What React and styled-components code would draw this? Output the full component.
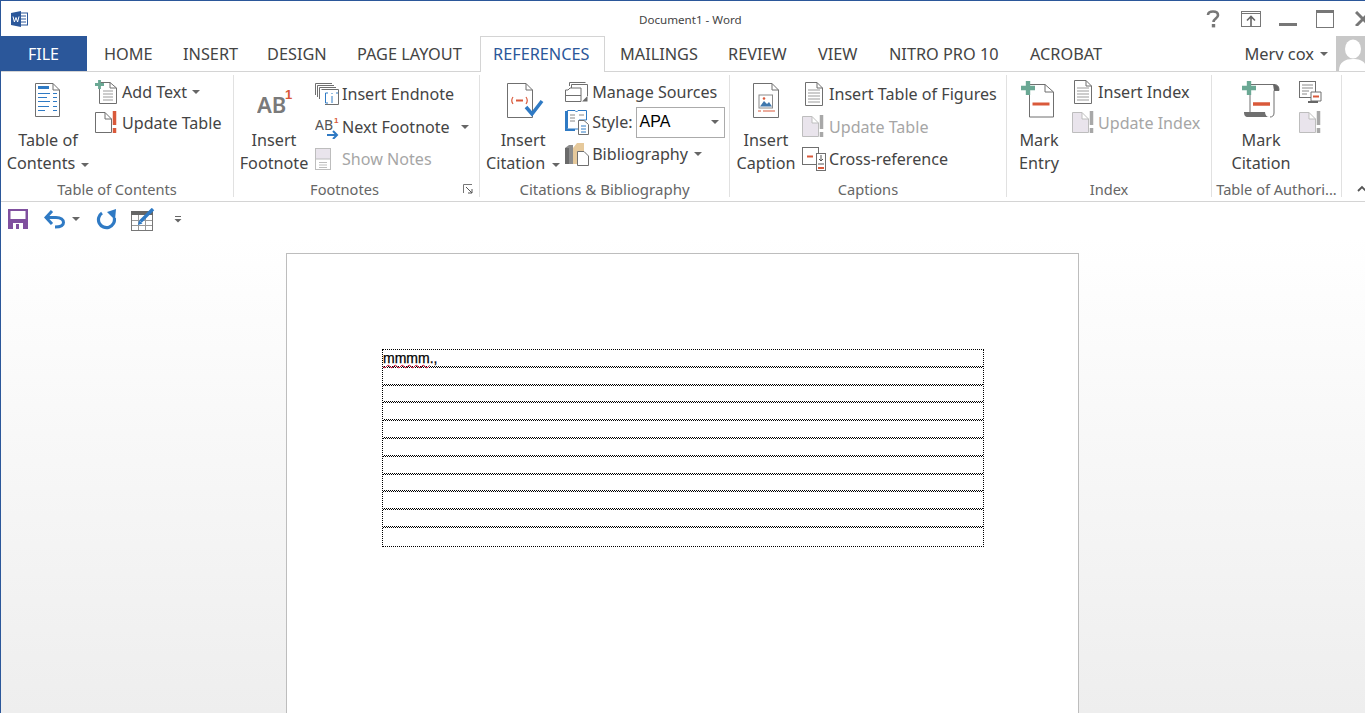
import React from 'react';
import styled, { createGlobalStyle } from 'styled-components';

const Global = createGlobalStyle`
  html, body {
    margin: 0;
    height: 100%;
    overflow: hidden;
    background: #fff;
  }
  svg {
    display: block;
  }
`;

const FONT = '"Noto Sans", "Open Sans", sans-serif';

const Window = styled.div`
  display: flex;
  flex-direction: column;
  height: 713px;
  overflow: hidden;
  box-sizing: border-box;
  border-top: 1px solid #2b579a;
  border-left: 1px solid #2b579a;
  font-family: ${FONT};
  color: #444;
`;

const TitleBar = styled.div`
  position: relative;
  display: flex;
  align-items: center;
  flex: none;
  height: 35px;
  padding-left: 10px;
`;

const Title = styled.div`
  position: absolute;
  left: 638px;
  top: 11px;
  font-size: 11.6px;
  line-height: 16px;
  color: #444;
`;

const Controls = styled.div`
  margin-left: auto;
  display: flex;
  align-items: center;
`;

const Control = styled.div`
  margin-left: ${p => p.$ml}px;
  margin-top: ${p => p.$drop || 0}px;
`;

const TabBar = styled.div`
  display: flex;
  flex: none;
  height: 36px;
  box-sizing: border-box;
  border-bottom: 1px solid #d4d4d4;
`;

const FileTab = styled.div`
  flex: 0 0 87px;
  height: 35px;
  margin-left: -1px;
  margin-right: 2px;
  display: flex;
  align-items: center;
  justify-content: center;
  background: #2b579a;
  color: #fff;
  font-size: 16px;
`;

const Tab = styled.div`
  flex: 0 0 ${p => p.$w}px;
  height: 35px;
  box-sizing: border-box;
  display: flex;
  align-items: center;
  padding-left: ${p => (p.$active ? 12 : 15)}px;
  font-size: 16.3px;
  white-space: nowrap;
  color: ${p => (p.$active ? '#2b579a' : '#444')};
  background: #fff;
  ${p => p.$active && `
    height: 36px;
    margin-bottom: -1px;
    padding-bottom: 2px;
    border: 1px solid #d4d4d4;
    border-bottom: none;
  `}
`;

const Account = styled.div`
  margin-left: auto;
  display: flex;
  align-items: center;
  gap: 8px;
  height: 35px;
  font-size: 16.4px;
`;

const Ribbon = styled.div`
  display: flex;
  flex: none;
  height: 130px;
  box-sizing: border-box;
  border-bottom: 1px solid #d4d4d4;
  background: #fff;
`;

const Group = styled.div`
  position: relative;
  flex: 0 0 ${p => p.$w}px;
  box-sizing: border-box;
  display: flex;
  flex-direction: column;
  height: 122px;
  margin-top: 3px;
  border-right: 1px solid #e1e1e1;
`;

const GroupBody = styled.div`
  flex: 1;
  min-height: 0;
  display: flex;
  padding-left: ${p => p.$pad}px;
`;

const GroupLabel = styled.div`
  flex: none;
  height: 19px;
  padding-right: ${p => p.$inset || 0}px;
  text-align: center;
  font-size: ${p => p.$size || 14.6}px;
  line-height: 22px;
  color: #666;
  white-space: nowrap;
`;

const Launcher = styled.div`
  position: absolute;
  right: 6px;
  bottom: 3px;
`;

const LargeButton = styled.div`
  flex: 0 0 ${p => p.$w}px;
  display: flex;
  flex-direction: column;
  align-items: center;
`;

const LargeIcon = styled.div`
  height: ${p => 54 - (p.$top ?? 8)}px;
  margin-top: ${p => p.$top ?? 8}px;
  margin-left: ${p => p.$shift || 0}px;
  display: flex;
  align-items: flex-start;
  justify-content: center;
`;

const LargeText = styled.div`
  font-size: 16.2px;
  line-height: 23px;
  text-align: center;
  white-space: nowrap;
`;

const SmallColumn = styled.div`
  display: flex;
  flex-direction: column;
  margin-left: ${p => p.$gap || 0}px;
  padding-top: ${p => p.$top}px;
`;

const SmallRow = styled.div`
  display: flex;
  align-items: center;
  height: ${p => p.$h}px;
  font-size: 16.1px;
  white-space: nowrap;
  color: ${p => (p.$off ? '#a6a6a6' : '#444')};
`;

const SmallIcon = styled.div`
  flex: 0 0 ${p => p.$w || 27}px;
  box-sizing: border-box;
  padding-left: ${p => p.$inset || 0}px;
  display: flex;
  align-items: center;
`;

const StyleSelect = styled.div`
  width: 89px;
  height: 31px;
  margin-left: 3px;
  box-sizing: border-box;
  display: flex;
  align-items: center;
  justify-content: space-between;
  padding: 0 5px 0 3px;
  border: 1px solid #ababab;
  font-family: "Liberation Sans", Arial, sans-serif;
  font-size: 16px;
  color: #000;
`;

const Caret = styled.span`
  display: inline-block;
  flex: none;
  width: 0;
  height: 0;
  margin-left: ${p => p.$ml || 0}px;
  vertical-align: middle;
  border-left: 4px solid transparent;
  border-right: 4px solid transparent;
  border-top: 4px solid #666;
`;

const CollapseButton = styled.div`
  flex: 1;
  display: flex;
  align-items: flex-end;
  justify-content: flex-end;
  padding-bottom: 9px;
  margin-right: -1px;
`;

const QuickBar = styled.div`
  display: flex;
  align-items: center;
  flex: none;
  height: 35px;
  padding-left: 7px;
  padding-bottom: 1px;
  box-sizing: border-box;
  background: #fff;
`;

const QuickItem = styled.div`
  display: flex;
  align-items: center;
  margin-left: ${p => p.$ml || 0}px;
`;

const Workspace = styled.div`
  flex: 1;
  min-height: 0;
  padding: 16px 0 0 285px;
  background: linear-gradient(#fff, #eee);
  overflow: hidden;
`;

const Page = styled.div`
  width: 793px;
  height: 600px;
  box-sizing: border-box;
  padding: 95px 0 0 95px;
  background: #fff;
  border: 1px solid #bdbdbd;
`;

const DocTable = styled.div`
  width: 602px;
  box-sizing: border-box;
  border: 1px dotted #000;
  font-family: "Liberation Sans", Arial, sans-serif;
  font-size: 14px;
  color: #000;
`;

// the row rule is Word's gridline: a two pixel checker, not a plain dotted line
const DocRow = styled.div`
  height: 17.8px;
  line-height: 16px;
  white-space: nowrap;
  -webkit-text-stroke: 0.25px #000;
  ${p => !p.$last && `
    background: conic-gradient(#000 25%, #fff 0 50%, #000 0 75%, #fff 0) left bottom / 2px 2px repeat-x;
  `}
`;

const Misspelt = styled.span`
  text-decoration: underline wavy #e0103a 1px;
  text-underline-offset: 1px;
`;

const LINE = '#6f6f6f';
const BLUE = '#2f7ac4';
const RED = '#d9593a';
const TEAL = '#6aa894';
const PALE = '#e9e4ec';
const PALE_LINE = '#bdbdbd';

// folded sheet of paper, used by most of the ribbon icons
const sheet = (w, h, f = 7) => `M.5 .5H${w - f}L${w - .5} ${f}V${h - .5}H.5Z M${w - f} .5V${f}H${w - .5}`;

const Plus = ({ x = 0, y = 0, s = 14 }) => (
  <path d={`M${x + s / 2} ${y}V${y + s}M${x} ${y + s / 2}H${x + s}`} stroke={TEAL} strokeWidth={s / 3.2} fill="none" />
);

const WordLogo = () => (
  <svg width="17" height="16" viewBox="0 0 17 16">
    <rect x="6" y="2" width="10.5" height="12" fill="#fff" stroke="#2b579a" />
    <path d="M10 5h5M10 8h5M10 11h5" stroke="#2b579a" />
    <path d="M0 2 10 0v16L0 14Z" fill="#2b579a" />
    <path d="M2 5.5 3.4 11 5 6.5 6.6 11 8 5.5" stroke="#fff" strokeWidth="1" fill="none" />
  </svg>
);

const TocIcon = () => (
  <svg width="26" height="35" viewBox="0 0 26 35">
    <path d={sheet(25, 34)} fill="#fff" stroke={LINE} />
    <path d="M3 4.5H14" stroke={BLUE} strokeWidth="3" />
    <path d="M3 10.5H15M18 10.5H22M3 14.5H12M18 14.5H22M3 18.5H15M18 18.5H22M3 23.5H14M18 23.5H22M3 27.5H10M18 27.5H22" stroke={BLUE} />
  </svg>
);

const AddTextIcon = () => (
  <svg width="23" height="24" viewBox="0 0 23 24">
    <path d="M4.5 2.5H15L21.5 8V23.5H4.5Z M15 2.5V8H21.5" fill="#fff" stroke={LINE} />
    <path d="M8 11H18M8 14H18M8 17H18M8 20H18" stroke="#9b9b9b" />
    <Plus x={0} y={0} s={9} />
  </svg>
);

const UpdateIcon = ({ off }) => (
  <svg width="23" height="23" viewBox="0 0 23 23">
    <path d={sheet(17, 21)} transform="translate(0 1)" fill={off ? PALE : '#fff'} stroke={off ? PALE_LINE : LINE} />
    <path d="M19.5 0V14M19.5 17V22" stroke={off ? '#a8a8a8' : RED} strokeWidth="3.5" />
  </svg>
);

const AbIcon = () => (
  <svg width="36" height="38" viewBox="0 0 36 38">
    <text x="0" y="31" fontFamily="'Noto Sans', sans-serif" fontWeight="600" fontSize="22" fill="#7a7a7a">AB</text>
    <text x="28" y="17" fontFamily="'Liberation Sans', sans-serif" fontWeight="700" fontSize="13" fill={RED}>1</text>
  </svg>
);

const EndnoteIcon = () => (
  <svg width="24" height="22" viewBox="0 0 24 22">
    <path d="M.5 12V.5H17M2.5 14V2.5H19M4.5 16V4.5H21" fill="none" stroke={LINE} />
    <path d="M6.5 6.5H23.5V21.5H10" fill="#fff" stroke={LINE} />
    <path d="M13 10H10.5V20H13M21 10H23" fill="none" stroke={BLUE} />
    <path d="M17 10V11M17 13V20" stroke={BLUE} />
  </svg>
);

const NextNoteIcon = () => (
  <svg width="24" height="24" viewBox="0 0 24 24">
    <text x="0" y="15" fontFamily="'Noto Sans', sans-serif" fontSize="14" fill="#555">AB</text>
    <text x="19" y="8" fontFamily="'Liberation Sans', sans-serif" fontWeight="700" fontSize="8" fill={RED}>1</text>
    <path d="M12 20H22M18 16l4 4-4 4" stroke={BLUE} strokeWidth="2" fill="none" />
  </svg>
);

const NotesIcon = () => (
  <svg width="16" height="22" viewBox="0 0 16 22">
    <rect x=".5" y=".5" width="15" height="21" fill={PALE} stroke={PALE_LINE} />
    <rect x=".5" y="11" width="15" height="10.5" fill="#fff" stroke={PALE_LINE} />
    <path d="M4 14.5H12M4 17H12M4 19.500H12" stroke={PALE_LINE} />
  </svg>
);

const LauncherIcon = () => (
  <svg width="10" height="10" viewBox="0 0 10 10">
    <path d="M.5 9V.5H9" fill="none" stroke="#777" />
    <path d="M3 3 9 9M9 5V9H5" fill="none" stroke="#555" />
  </svg>
);

const CitationIcon = () => (
  <svg width="38" height="36" viewBox="0 0 38 36">
    <path d={sheet(26, 35)} fill="#fff" stroke={LINE} />
    <path d="M6 14Q3.500 17.500 6 21M19 14Q21.500 17.500 19 21" fill="none" stroke={RED} strokeWidth="1.2" />
    <path d="M9 17.500H16" stroke={RED} strokeWidth="2" />
    <path d="M19 24 25 31 35 18" fill="none" stroke={BLUE} strokeWidth="3.5" />
  </svg>
);

const SourcesIcon = () => (
  <svg width="23" height="20" viewBox="0 0 23 20">
    <path d="M4.500 4V.5H20.500M6.500 6V2.500H22.500V14" fill="none" stroke={LINE} />
    <path d="M.5 8H3L5 6H16V19.500H.5Z" fill="#fff" stroke={LINE} />
    <path d="M.5 13.500H16" stroke={LINE} />
    <path d="M17 19.500 22.500 14V19.500Z" fill="#6a6a6a" />
  </svg>
);

const StyleIcon = () => (
  <svg width="24" height="25" viewBox="0 0 24 25">
    <path d="M1 1V20H10" fill="none" stroke={BLUE} strokeWidth="2" />
    <path d="M2.500 18.500V.5H10L11.500 2L13 .5H21.500V10H14V19H2.500Z" fill="#fff" stroke={BLUE} />
    <path d="M5 5H10M5 8H10M5 11H10M14 5H19" stroke="#888" />
    <path d="M13.500 10.500H19L23.500 14.500V24.500H13.500Z" fill="#fff" stroke={LINE} />
    <path d="M16 16H21M16 19H21M16 22H21" stroke={BLUE} />
  </svg>
);

const BiblioIcon = () => (
  <svg width="24" height="24" viewBox="0 0 24 24">
    <path d="M0 6 4 3H8V22H0Z" fill="#8c8c8c" />
    <path d="M0 6H4V22H0Z" fill="#6a6a6a" />
    <path d="M8 6 12 1H19V9H14V22H8Z" fill="#e6c99b" />
    <path d="M12.500 9.500H19L23.500 14V23.500H12.500Z" fill="#fff" stroke={LINE} />
  </svg>
);

const CaptionIcon = () => (
  <svg width="27" height="36" viewBox="0 0 27 36">
    <path d={sheet(26, 35)} fill="#fff" stroke={LINE} />
    <rect x="6" y="12" width="13.500" height="13" fill="#fff" stroke="#8a8a8a" />
    <path d="M7 23.500 11 18 14 21 16 19 19 23.500Z" fill="#3f77ad" />
    <circle cx="11" cy="15.500" r="1.300" fill={RED} />
    <path d="M5 28H8M10 28H22" stroke={RED} />
  </svg>
);

const FiguresIcon = () => (
  <svg width="18" height="24" viewBox="0 0 18 24">
    <path d={sheet(18, 24, 6)} fill="#fff" stroke={LINE} />
    <path d="M3 8H15M3 11H15M3 14H15M3 17H15M3 20H15" stroke="#9b9b9b" />
  </svg>
);

const CrossRefIcon = () => (
  <svg width="24" height="24" viewBox="0 0 24 24">
    <rect x=".5" y=".5" width="16" height="17" fill="#fff" stroke={LINE} />
    <path d="M5 9.500H11" stroke={RED} strokeWidth="2" />
    <rect x="14.500" y="6.500" width="9" height="17" fill="#fff" stroke={LINE} />
    <path d="M19 8V14M17 12l2 2 2-2M16 17H22" stroke="#555" fill="none" />
    <path d="M16 21H22" stroke={RED} strokeWidth="2" />
  </svg>
);

const MarkEntryIcon = () => (
  <svg width="33" height="37" viewBox="0 0 33 37">
    <path d="M8.500 3.500H24L32.500 11V36H8.500Z M24 3.500V11H32.500" fill="#fff" stroke={LINE} />
    <path d="M11.500 23H28.500" stroke={RED} strokeWidth="3" />
    <Plus x={0} y={0} s={14} />
  </svg>
);

const MarkCitationIcon = () => (
  <svg width="38" height="37" viewBox="0 0 38 37">
    <path d="M7.500 3.500H33M32 3.500C36 3.500 37 6 37 9.500H32V32C32 35 30 36 28 36" fill="none" stroke={LINE} />
    <path d="M31 3.500C36 3.500 37 6 37 9.500H32Z" fill="#666" />
    <path d="M8 3.500V31" stroke={LINE} />
    <path d="M2 31H23C23 34 25 36 27 36H6C3 36 2 34 2 31Z" fill="#6f6f6f" />
    <path d="M11 23H28" stroke={RED} strokeWidth="3.500" />
    <Plus x={0} y={0} s={14} />
  </svg>
);

const SmallCitationIcon = () => (
  <svg width="23" height="22" viewBox="0 0 23 22">
    <rect x=".5" y=".5" width="16" height="16" fill="#fff" stroke={LINE} />
    <path d="M3 4H14M3 7H14M3 10H10M3 13H8" stroke="#8a8a8a" />
    <path d="M12 11H22V20H12Z" fill="#fff" stroke={LINE} />
    <path d="M14 15.500H20" stroke={RED} strokeWidth="2" />
    <path d="M9 20H19V22H9Z" fill="#666" />
  </svg>
);

const HelpIcon = () => (
  <svg width="14" height="18" viewBox="0 0 14 18">
    <path d="M2 5C2 2.500 4 1.500 7 1.500S12 3 12 5.200C12 8.500 7.500 8.500 7.500 12" fill="none" stroke="#777" strokeWidth="2.600" />
    <rect x="5.800" y="14" width="3.400" height="3.400" fill="#777" />
  </svg>
);

const RestoreRibbonIcon = () => (
  <svg width="20" height="16" viewBox="0 0 20 16">
    <rect x=".5" y=".5" width="19" height="15" fill="none" stroke="#777" />
    <path d="M0 2.500H20" stroke="#777" />
    <path d="M10 15V6M6 9.500 10 5.500 14 9.500" fill="none" stroke="#666" strokeWidth="1.600" />
  </svg>
);

const MinimizeIcon = () => (
  <svg width="18" height="3" viewBox="0 0 18 3">
    <rect width="18" height="3" fill="#777" />
  </svg>
);

const MaximizeIcon = () => (
  <svg width="18" height="18" viewBox="0 0 18 18">
    <rect x=".5" y=".5" width="17" height="17" fill="none" stroke="#777" />
    <rect width="18" height="3" fill="#777" />
  </svg>
);

const CloseIcon = () => (
  <svg width="10" height="15" viewBox="0 0 10 15">
    <path d="M1 1 15 15M15 1 1 15" stroke="#777" strokeWidth="3" />
  </svg>
);

const Avatar = () => (
  <svg width="29" height="35" viewBox="0 0 29 35">
    <rect width="29" height="35" fill="#c8c8c8" />
    <ellipse cx="17" cy="13" rx="8" ry="9.500" fill="#fff" />
    <path d="M3 35C3 26 9 23 17 23S31 26 31 35Z" fill="#fff" />
  </svg>
);

const ChevronUp = () => (
  <svg width="9" height="7" viewBox="0 0 9 7">
    <path d="M1 6 5 2 9 6" fill="none" stroke="#555" strokeWidth="1.800" />
  </svg>
);

const SaveIcon = () => (
  <svg width="20" height="20" viewBox="0 0 20 20">
    <path d="M0 0H20V20H0Z" fill="#80509f" />
    <rect x="2.500" y="2" width="15" height="8" fill="#fff" />
    <rect x="5" y="14" width="10" height="6" fill="#fff" />
    <rect x="8" y="15" width="3" height="5" fill="#80509f" />
  </svg>
);

const UndoIcon = () => (
  <svg width="21" height="20" viewBox="0 0 21 20">
    <path d="M8 2 2 8.500 8 15" fill="none" stroke={BLUE} strokeWidth="3" />
    <path d="M3 8.500H12C17 8.500 19.500 11 19.500 13.500C19.500 16.500 16.500 18 11 18" fill="none" stroke={BLUE} strokeWidth="3" />
  </svg>
);

const RedoIcon = () => (
  <svg width="20" height="21" viewBox="0 0 20 21">
    <path d="M6 4A8 8 0 1 0 18.300 9" fill="none" stroke={BLUE} strokeWidth="3.200" />
    <path d="M11 3 20 0 19 11Z" fill={BLUE} />
  </svg>
);

const TableEditIcon = () => (
  <svg width="24" height="23" viewBox="0 0 24 23">
    <rect x=".5" y="3.500" width="21" height="19" fill="#fff" stroke="#777" />
    <rect y="3" width="22" height="4" fill="#666" />
    <path d="M7.500 7V22M14.500 7V22M1 12.500H21M1 17.500H21" stroke="#999" />
    <path d="M9.500 13.500 22 1" stroke={BLUE} strokeWidth="3.400" />
    <path d="M7 17 8 12.500 11.500 15.500Z" fill={BLUE} />
  </svg>
);

const OverflowIcon = () => (
  <svg width="8" height="7" viewBox="0 0 8 7">
    <path d="M1 .5H7" stroke="#666" />
    <path d="M.5 3H7.500L4 6.500Z" fill="#666" />
  </svg>
);

const TABS = [
  { name: 'HOME', w: 79 },
  { name: 'INSERT', w: 84 },
  { name: 'DESIGN', w: 90 },
  { name: 'PAGE LAYOUT', w: 138 },
  { name: 'REFERENCES', w: 125, active: true },
  { name: 'MAILINGS', w: 108 },
  { name: 'REVIEW', w: 90 },
  { name: 'VIEW', w: 71 },
  { name: 'NITRO PRO 10', w: 141 },
  { name: 'ACROBAT', w: 90 },
];

export default function App() {
  return (
    <Window>
      <Global />
      <TitleBar>
        <WordLogo />
        <Title>Document1 - Word</Title>
        <Controls>
          <HelpIcon />
          <Control $ml={21}><RestoreRibbonIcon /></Control>
          <Control $ml={18} $drop={12}><MinimizeIcon /></Control>
          <Control $ml={19}><MaximizeIcon /></Control>
          <Control $ml={21}><CloseIcon /></Control>
        </Controls>
      </TitleBar>

      <TabBar>
        <FileTab>FILE</FileTab>
        {TABS.map(t => (
          <Tab key={t.name} $w={t.w} $active={t.active}>{t.name}</Tab>
        ))}
        <Account>
          Merv cox
          <Caret $ml={-2} />
          <Avatar />
        </Account>
      </TabBar>

      <Ribbon>
        <Group $w={233}>
          <GroupBody $pad={4}>
            <LargeButton $w={86}>
              <LargeIcon><TocIcon /></LargeIcon>
              <LargeText>Table of<br />Contents<Caret $ml={6} /></LargeText>
            </LargeButton>
            <SmallColumn $gap={4} $top={1}>
              <SmallRow $h={31}><SmallIcon><AddTextIcon /></SmallIcon>Add Text<Caret $ml={5} /></SmallRow>
              <SmallRow $h={31}><SmallIcon><UpdateIcon /></SmallIcon>Update Table</SmallRow>
            </SmallColumn>
          </GroupBody>
          <GroupLabel>Table of Contents</GroupLabel>
        </Group>

        <Group $w={246}>
          <GroupBody $pad={5}>
            <LargeButton $w={70}>
              <LargeIcon $shift={1} $top={7}><AbIcon /></LargeIcon>
              <LargeText>Insert<br />Footnote</LargeText>
            </LargeButton>
            <SmallColumn $gap={6} $top={3}>
              <SmallRow $h={32.5}><SmallIcon><EndnoteIcon /></SmallIcon>Insert Endnote</SmallRow>
              <SmallRow $h={32.5}><SmallIcon><NextNoteIcon /></SmallIcon>Next Footnote<Caret $ml={11} /></SmallRow>
              <SmallRow $h={32.5} $off><SmallIcon><NotesIcon /></SmallIcon>Show Notes</SmallRow>
            </SmallColumn>
          </GroupBody>
          <GroupLabel $inset={24}>Footnotes</GroupLabel>
          <Launcher><LauncherIcon /></Launcher>
        </Group>

        <Group $w={250}>
          <GroupBody $pad={6}>
            <LargeButton $w={73}>
              <LargeIcon $shift={6}><CitationIcon /></LargeIcon>
              <LargeText>Insert<br />Citation<Caret $ml={7} /></LargeText>
            </LargeButton>
            <SmallColumn $gap={5} $top={1}>
              <SmallRow $h={31}><SmallIcon><SourcesIcon /></SmallIcon>Manage Sources</SmallRow>
              <SmallRow $h={30}>
                <SmallIcon><StyleIcon /></SmallIcon>Style:
                <StyleSelect>APA<Caret /></StyleSelect>
              </SmallRow>
              <SmallRow $h={33}><SmallIcon><BiblioIcon /></SmallIcon>Bibliography<Caret $ml={6} /></SmallRow>
            </SmallColumn>
          </GroupBody>
          <GroupLabel $size={15}>Citations &amp; Bibliography</GroupLabel>
        </Group>

        <Group $w={277}>
          <GroupBody $pad={6}>
            <LargeButton $w={60}>
              <LargeIcon><CaptionIcon /></LargeIcon>
              <LargeText>Insert<br />Caption</LargeText>
            </LargeButton>
            <SmallColumn $gap={6} $top={3}>
              <SmallRow $h={32.5}><SmallIcon $inset={3}><FiguresIcon /></SmallIcon>Insert Table of Figures</SmallRow>
              <SmallRow $h={32.5} $off><SmallIcon><UpdateIcon off /></SmallIcon>Update Table</SmallRow>
              <SmallRow $h={32.5}><SmallIcon><CrossRefIcon /></SmallIcon>Cross-reference</SmallRow>
            </SmallColumn>
          </GroupBody>
          <GroupLabel>Captions</GroupLabel>
        </Group>

        <Group $w={205}>
          <GroupBody $pad={10}>
            <LargeButton $w={44}>
              <LargeIcon $shift={-3} $top={6}><MarkEntryIcon /></LargeIcon>
              <LargeText>Mark<br />Entry</LargeText>
            </LargeButton>
            <SmallColumn $gap={11} $top={1}>
              <SmallRow $h={31}><SmallIcon $w={26} $inset={2}><FiguresIcon /></SmallIcon>Insert Index</SmallRow>
              <SmallRow $h={31} $off><SmallIcon $w={26}><UpdateIcon off /></SmallIcon>Update Index</SmallRow>
            </SmallColumn>
          </GroupBody>
          <GroupLabel>Index</GroupLabel>
        </Group>

        <Group $w={130}>
          <GroupBody $pad={18}>
            <LargeButton $w={62}>
              <LargeIcon $top={6}><MarkCitationIcon /></LargeIcon>
              <LargeText>Mark<br />Citation</LargeText>
            </LargeButton>
            <SmallColumn $gap={7} $top={1}>
              <SmallRow $h={31}><SmallIcon $w={24}><SmallCitationIcon /></SmallIcon></SmallRow>
              <SmallRow $h={31} $off><SmallIcon $w={24}><UpdateIcon off /></SmallIcon></SmallRow>
            </SmallColumn>
          </GroupBody>
          <GroupLabel>Table of Authori...</GroupLabel>
        </Group>

        <CollapseButton><ChevronUp /></CollapseButton>
      </Ribbon>

      <QuickBar>
        <SaveIcon />
        <QuickItem $ml={16}><UndoIcon /></QuickItem>
        <QuickItem $ml={7}><Caret /></QuickItem>
        <QuickItem $ml={16}><RedoIcon /></QuickItem>
        <QuickItem $ml={15}><TableEditIcon /></QuickItem>
        <QuickItem $ml={19}><OverflowIcon /></QuickItem>
      </QuickBar>

      <Workspace>
        <Page>
          <DocTable>
            {Array.from({ length: 11 }, (_, i) => (
              <DocRow key={i} $last={i === 10}>
                {i === 0 && <><Misspelt>mmmm</Misspelt>.,</>}
              </DocRow>
            ))}
          </DocTable>
        </Page>
      </Workspace>
    </Window>
  );
}
